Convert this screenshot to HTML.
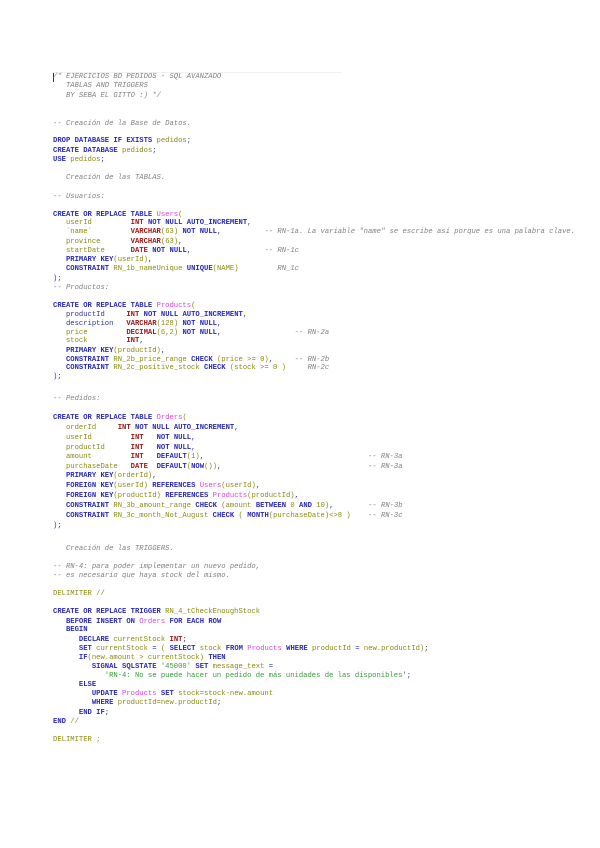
<!DOCTYPE html>
<html><head><meta charset="utf-8"><style>
html,body{margin:0;padding:0;background:#fff;width:600px;height:848px;overflow:hidden}
.l{position:absolute;left:53px;white-space:pre;font-family:"Liberation Mono",monospace;font-size:7.2px;line-height:9px;color:#555}
.k{color:#2a2ab8;font-weight:bold}
.t{color:#a01818;font-weight:bold}
.i{color:#8a8a10}
.m{color:#e040e0}
.c{color:#808080;font-style:italic}
.s{color:#3a9a3a}
.p{color:#3030b0}
</style></head><body>
<div style="position:absolute;left:52px;top:72px;width:290px;height:1px;background:#f0f0f0"></div>
<div style="position:absolute;left:53px;top:73px;width:1px;height:9px;background:#333"></div>
<div class="l c" style="top:73px">/* EJERCICIOS BD PEDIDOS - SQL AVANZADO</div>
<div class="l c" style="top:82px">   TABLAS AND TRIGGERS</div>
<div class="l c" style="top:92px">   BY SEBA EL GITTO :) */</div>
<div class="l c" style="top:120px">-- Creación de la Base de Datos.</div>
<div class="l" style="top:137px"><span class="k">DROP DATABASE IF EXISTS</span> <span class="i">pedidos</span><span class="p">;</span></div>
<div class="l" style="top:147px"><span class="k">CREATE DATABASE</span> <span class="i">pedidos</span><span class="p">;</span></div>
<div class="l" style="top:156px"><span class="k">USE</span> <span class="i">pedidos</span><span class="p">;</span></div>
<div class="l c" style="top:174px">   Creación de las TABLAS.</div>
<div class="l c" style="top:193px">-- Usuarios:</div>
<div class="l" style="top:211px"><span class="k">CREATE OR REPLACE TABLE</span> <span class="m">Users</span><span class="i">(</span></div>
<div class="l" style="top:219px">   <span class="i">userId</span>         <span class="t">INT</span> <span class="k">NOT NULL AUTO_INCREMENT</span><span class="p">,</span></div>
<div class="l" style="top:228px">   <span class="i">`name`</span>         <span class="t">VARCHAR</span><span class="i">(63)</span> <span class="k">NOT NULL</span><span class="p">,</span>          <span class="c">-- RN-1a. La variable "name" se escribe así porque es una palabra clave.</span></div>
<div class="l" style="top:238px">   <span class="i">province</span>       <span class="t">VARCHAR</span><span class="i">(63)</span><span class="p">,</span></div>
<div class="l" style="top:247px">   <span class="i">startDate</span>      <span class="t">DATE</span> <span class="k">NOT NULL</span><span class="p">,</span>                 <span class="c">-- RN-1c</span></div>
<div class="l" style="top:256px">   <span class="k">PRIMARY KEY</span><span class="i">(userId)</span><span class="p">,</span></div>
<div class="l" style="top:265px">   <span class="k">CONSTRAINT</span> <span class="i">RN_1b_nameUnique</span> <span class="k">UNIQUE</span><span class="i">(NAME)</span>         <span class="c">RN_1c</span></div>
<div class="l" style="top:275px"><span class="p">);</span></div>
<div class="l c" style="top:284px">-- Productos:</div>
<div class="l" style="top:302px"><span class="k">CREATE OR REPLACE TABLE</span> <span class="m">Products</span><span class="i">(</span></div>
<div class="l" style="top:311px">   <span class="p">productId</span>     <span class="t">INT</span> <span class="k">NOT NULL AUTO_INCREMENT</span><span class="p">,</span></div>
<div class="l" style="top:320px">   <span class="p">description</span>   <span class="t">VARCHAR</span><span class="i">(128)</span> <span class="k">NOT NULL</span><span class="p">,</span></div>
<div class="l" style="top:329px">   <span class="i">price</span>         <span class="t">DECIMAL</span><span class="i">(6,2)</span> <span class="k">NOT NULL</span><span class="p">,</span>                 <span class="c">-- RN-2a</span></div>
<div class="l" style="top:337px">   <span class="i">stock</span>         <span class="t">INT</span><span class="p">,</span></div>
<div class="l" style="top:347px">   <span class="k">PRIMARY KEY</span><span class="i">(productId)</span><span class="p">,</span></div>
<div class="l" style="top:356px">   <span class="k">CONSTRAINT</span> <span class="i">RN_2b_price_range</span> <span class="k">CHECK</span> <span class="i">(price &gt;= 0)</span><span class="p">,</span>     <span class="c">-- RN-2b</span></div>
<div class="l" style="top:364px">   <span class="k">CONSTRAINT</span> <span class="i">RN_2c_positive_stock</span> <span class="k">CHECK</span> <span class="i">(stock &gt;= 0 )</span>     <span class="c">RN-2c</span></div>
<div class="l" style="top:373px"><span class="p">);</span></div>
<div class="l c" style="top:395px">-- Pedidos:</div>
<div class="l" style="top:414px"><span class="k">CREATE OR REPLACE TABLE</span> <span class="m">Orders</span><span class="i">(</span></div>
<div class="l" style="top:424px">   <span class="i">orderId</span>     <span class="t">INT</span> <span class="k">NOT NULL AUTO_INCREMENT</span><span class="p">,</span></div>
<div class="l" style="top:434px">   <span class="i">userId</span>         <span class="t">INT</span>   <span class="k">NOT NULL</span><span class="p">,</span></div>
<div class="l" style="top:444px">   <span class="i">productId</span>      <span class="t">INT</span>   <span class="k">NOT NULL</span><span class="p">,</span></div>
<div class="l" style="top:453px">   <span class="i">amount</span>         <span class="t">INT</span>   <span class="k">DEFAULT</span><span class="i">(1)</span><span class="p">,</span>                                      <span class="c">-- RN-3a</span></div>
<div class="l" style="top:463px">   <span class="i">purchaseDate</span>   <span class="t">DATE</span>  <span class="k">DEFAULT</span><span class="i">(</span><span class="k">NOW</span><span class="i">())</span><span class="p">,</span>                                  <span class="c">-- RN-3a</span></div>
<div class="l" style="top:472px">   <span class="k">PRIMARY KEY</span><span class="i">(orderId)</span><span class="p">,</span></div>
<div class="l" style="top:482px">   <span class="k">FOREIGN KEY</span><span class="i">(userId)</span> <span class="k">REFERENCES</span> <span class="m">Users</span><span class="i">(userId)</span><span class="p">,</span></div>
<div class="l" style="top:492px">   <span class="k">FOREIGN KEY</span><span class="i">(productId)</span> <span class="k">REFERENCES</span> <span class="m">Products</span><span class="i">(productId)</span><span class="p">,</span></div>
<div class="l" style="top:502px">   <span class="k">CONSTRAINT</span> <span class="i">RN_3b_amount_range</span> <span class="k">CHECK</span> <span class="i">(amount</span> <span class="k">BETWEEN</span> <span class="i">0</span> <span class="k">AND</span> <span class="i">10)</span><span class="p">,</span>        <span class="c">-- RN-3b</span></div>
<div class="l" style="top:512px">   <span class="k">CONSTRAINT</span> <span class="i">RN_3c_month_Not_August</span> <span class="k">CHECK</span> <span class="i">(</span> <span class="k">MONTH</span><span class="i">(purchaseDate)&lt;&gt;8 )</span>    <span class="c">-- RN-3c</span></div>
<div class="l" style="top:522px"><span class="p">);</span></div>
<div class="l c" style="top:545px">   Creación de las TRIGGERS.</div>
<div class="l c" style="top:563px">-- RN-4: para poder implementar un nuevo pedido,</div>
<div class="l c" style="top:572px">-- es necesario que haya stock del mismo.</div>
<div class="l" style="top:590px"><span class="i">DELIMITER //</span></div>
<div class="l" style="top:608px"><span class="k">CREATE OR REPLACE TRIGGER</span> <span class="i">RN_4_tCheckEnoughStock</span></div>
<div class="l" style="top:618px">   <span class="k">BEFORE INSERT ON</span> <span class="m">Orders</span> <span class="k">FOR EACH ROW</span></div>
<div class="l" style="top:626px">   <span class="k">BEGIN</span></div>
<div class="l" style="top:636px">      <span class="k">DECLARE</span> <span class="i">currentStock</span> <span class="t">INT</span><span class="p">;</span></div>
<div class="l" style="top:645px">      <span class="k">SET</span> <span class="i">currentStock</span> <span class="p">=</span> <span class="i">(</span> <span class="k">SELECT</span> <span class="i">stock</span> <span class="k">FROM</span> <span class="m">Products</span> <span class="k">WHERE</span> <span class="i">productId</span> <span class="p">=</span> <span class="i">new.productId)</span><span class="p">;</span></div>
<div class="l" style="top:654px">      <span class="k">IF</span><span class="i">(new.amount &gt; currentStock)</span> <span class="k">THEN</span></div>
<div class="l" style="top:663px">         <span class="k">SIGNAL SQLSTATE</span> <span class="s">'45000'</span> <span class="k">SET</span> <span class="i">message_text</span> <span class="p">=</span></div>
<div class="l" style="top:672px">            <span class="s">'RN-4: No se puede hacer un pedido de más unidades de las disponibles'</span><span class="p">;</span></div>
<div class="l" style="top:681px">      <span class="k">ELSE</span></div>
<div class="l" style="top:690px">         <span class="k">UPDATE</span> <span class="m">Products</span> <span class="k">SET</span> <span class="i">stock=stock-new.amount</span></div>
<div class="l" style="top:699px">         <span class="k">WHERE</span> <span class="i">productId=new.productId</span><span class="p">;</span></div>
<div class="l" style="top:709px">      <span class="k">END IF</span><span class="p">;</span></div>
<div class="l" style="top:718px"><span class="k">END</span> <span class="i">//</span></div>
<div class="l" style="top:736px"><span class="i">DELIMITER ;</span></div>
</body></html>
